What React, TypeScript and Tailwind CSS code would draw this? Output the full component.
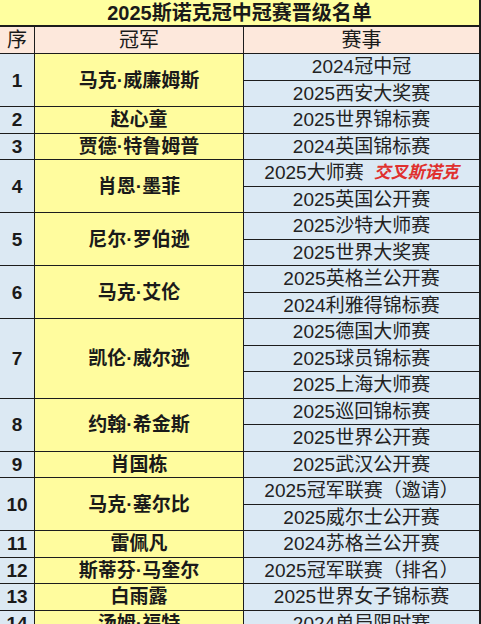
type Entry = {
  no: string
  name: string
  events: { text: string; note?: string }[]
}

const entries: Entry[] = [
  { no: '1', name: '马克·威廉姆斯', events: [{ text: '2024冠中冠' }, { text: '2025西安大奖赛' }] },
  { no: '2', name: '赵心童', events: [{ text: '2025世界锦标赛' }] },
  { no: '3', name: '贾德·特鲁姆普', events: [{ text: '2024英国锦标赛' }] },
  { no: '4', name: '肖恩·墨菲', events: [{ text: '2025大师赛', note: '交叉斯诺克' }, { text: '2025英国公开赛' }] },
  { no: '5', name: '尼尔·罗伯逊', events: [{ text: '2025沙特大师赛' }, { text: '2025世界大奖赛' }] },
  { no: '6', name: '马克·艾伦', events: [{ text: '2025英格兰公开赛' }, { text: '2024利雅得锦标赛' }] },
  {
    no: '7',
    name: '凯伦·威尔逊',
    events: [{ text: '2025德国大师赛' }, { text: '2025球员锦标赛' }, { text: '2025上海大师赛' }]
  },
  { no: '8', name: '约翰·希金斯', events: [{ text: '2025巡回锦标赛' }, { text: '2025世界公开赛' }] },
  { no: '9', name: '肖国栋', events: [{ text: '2025武汉公开赛' }] },
  { no: '10', name: '马克·塞尔比', events: [{ text: '2025冠军联赛（邀请）' }, { text: '2025威尔士公开赛' }] },
  { no: '11', name: '雷佩凡', events: [{ text: '2024苏格兰公开赛' }] },
  { no: '12', name: '斯蒂芬·马奎尔', events: [{ text: '2025冠军联赛（排名）' }] },
  { no: '13', name: '白雨露', events: [{ text: '2025世界女子锦标赛' }] },
  { no: '14', name: '汤姆·福特', events: [{ text: '2024单局限时赛' }] }
]

const groupHeight: Record<number, string> = {
  1: 'h-[26.5px]',
  2: 'h-[53px]',
  3: 'h-[79.5px]'
}

function Row({ entry }: { entry: Entry }) {
  return (
    <div className={`flex shrink-0 ${groupHeight[entry.events.length]}`}>
      <div className="flex w-[35px] shrink-0 items-center justify-center border-r border-b border-[#1c1c1c] bg-[#dce9f3] text-[19px] font-bold text-[#1a1a1a]">
        {entry.no}
      </div>
      <div className="flex w-[209px] shrink-0 items-center justify-center border-r border-b border-[#1c1c1c] bg-[#fffc9e] text-[19px] font-bold text-[#1a1a1a]">
        {entry.name}
      </div>
      <div className="flex min-w-0 flex-1 flex-col">
        {entry.events.map((ev) => (
          <div
            key={ev.text}
            className="flex min-h-0 flex-1 items-center justify-center border-b border-[#1c1c1c] bg-[#dbe9f4] text-[19px] text-[#222]"
          >
            <span>{ev.text}</span>
            {ev.note ? (
              <span className="ml-[10px] text-[17px] font-bold italic text-[#e0302e]">{ev.note}</span>
            ) : null}
          </div>
        ))}
      </div>
    </div>
  )
}

export default function App() {
  return (
    <div className="flex h-[624px] w-[481px] flex-col overflow-hidden border-r-2 border-[#1c1c1c] bg-white font-['Liberation_Sans','Noto_Sans_CJK_SC',sans-serif] leading-none">
      <div className="flex h-[27px] shrink-0 items-center justify-center border-b-2 border-[#1c1c1c] bg-[#ffff9f] text-[20px] font-bold text-[#1a1a1a]">
        2025斯诺克冠中冠赛晋级名单
      </div>
      <div className="flex h-[27px] shrink-0 border-b border-[#1c1c1c] bg-[#fde8dc] text-[20px] text-[#1a1a1a]">
        <div className="flex w-[35px] shrink-0 items-center justify-center border-r border-[#1c1c1c]">序</div>
        <div className="flex w-[209px] shrink-0 items-center justify-center border-r border-[#1c1c1c]">冠军</div>
        <div className="flex flex-1 items-center justify-center">赛事</div>
      </div>
      {entries.map((e) => (
        <Row key={e.no} entry={e} />
      ))}
    </div>
  )
}
